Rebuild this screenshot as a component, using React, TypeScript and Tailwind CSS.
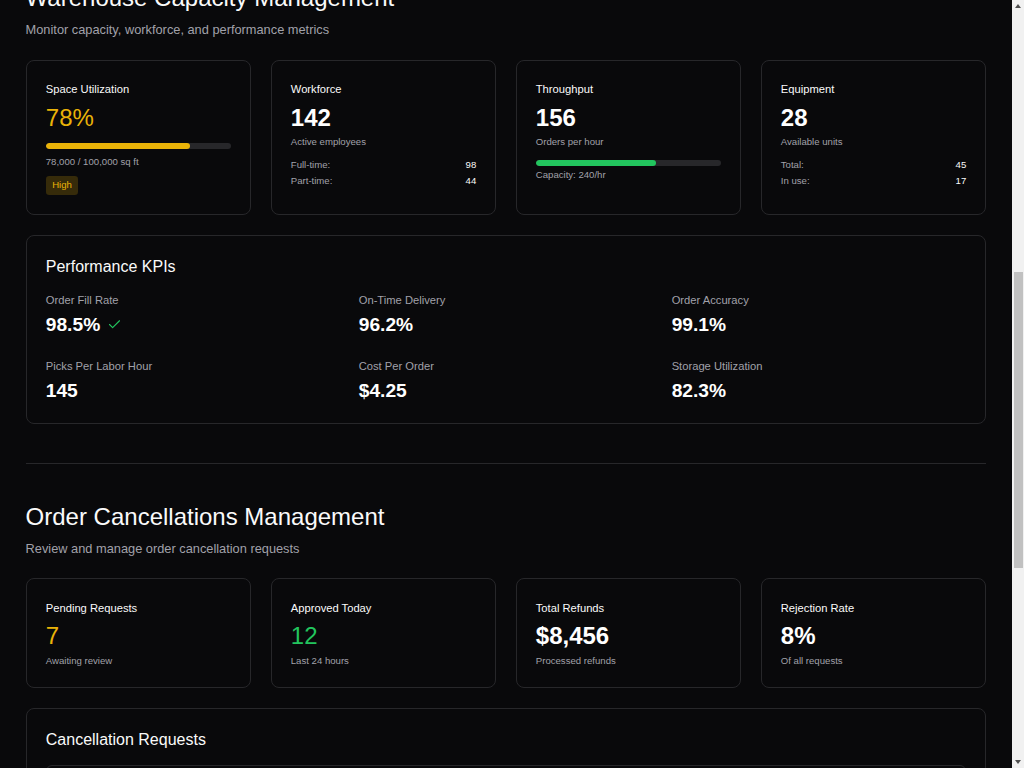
import { useEffect } from 'react';
import { Check } from 'lucide-react';

const CANCEL_STATS = [
  { title: 'Pending Requests', value: '7', note: 'Awaiting review', tone: 'text-[#eab308]' },
  { title: 'Approved Today', value: '12', note: 'Last 24 hours', tone: 'text-[#22c55e]' },
  { title: 'Total Refunds', value: '$8,456', note: 'Processed refunds', tone: 'font-bold text-white' },
  { title: 'Rejection Rate', value: '8%', note: 'Of all requests', tone: 'font-bold text-white' },
];

const KPIS = [
  { label: 'Order Fill Rate', value: '98.5%', ok: true },
  { label: 'On-Time Delivery', value: '96.2%' },
  { label: 'Order Accuracy', value: '99.1%' },
  { label: 'Picks Per Labor Hour', value: '145' },
  { label: 'Cost Per Order', value: '$4.25' },
  { label: 'Storage Utilization', value: '82.3%' },
];

const REQUESTS = [
  { id: 'ORD-10482', customer: 'Sarah Johnson', amount: '$245.00', reason: 'Changed mind', status: 'Pending' },
  { id: 'ORD-10477', customer: 'Michael Chen', amount: '$1,120.50', reason: 'Found better price', status: 'Pending' },
  { id: 'ORD-10471', customer: 'Emily Davis', amount: '$89.99', reason: 'Shipping delay', status: 'Approved' },
  { id: 'ORD-10465', customer: 'James Wilson', amount: '$432.75', reason: 'Ordered by mistake', status: 'Rejected' },
];

const Card: React.FC<{ className?: string; children: React.ReactNode }> = ({ className = '', children }) => (
  <div className={`rounded-lg border border-[#27272a] bg-[#09090b] px-[19.2px] pb-[19.2px] ${className}`}>
    {children}
  </div>
);

const CardTitle: React.FC<{ children: React.ReactNode }> = ({ children }) => (
  <p className="text-[11.2px] leading-4 text-[#fafafa]">{children}</p>
);

const Row: React.FC<{ label: string; value: string }> = ({ label, value }) => (
  <div className="flex justify-between text-[9.6px] leading-[12.8px]">
    <span className="text-[#a1a1aa]">{label}</span>
    <span className="text-[#fafafa]">{value}</span>
  </div>
);

const Bar: React.FC<{ pct: number; color: string }> = ({ pct, color }) => (
  <div className="h-[6.4px] w-full overflow-hidden rounded-full bg-[#27272a]">
    <div className={`h-full rounded-full ${color}`} style={{ width: `${pct}%` }} />
  </div>
);

const SectionHeader: React.FC<{ title: string; subtitle: string }> = ({ title, subtitle }) => (
  <div className="mb-[20.4px]">
    <h1 className="text-[24px] leading-[28.8px] font-medium text-[#fafafa]">{title}</h1>
    <p className="mt-[7.2px] text-[12.8px] leading-[19.2px] text-[#a1a1aa]">{subtitle}</p>
  </div>
);

// classic light scrollbar, as seen in the screenshot
const ScrollTrack: React.FC = () => (
  <div aria-hidden className="fixed inset-y-0 right-0 flex w-[12px] flex-col items-center bg-[#f1f1f1]">
    <svg width="6" height="4" viewBox="0 0 6 4" className="mt-[4px] fill-[#505050]">
      <path d="M3 0 6 4H0z" />
    </svg>
    <div className="mt-[264px] h-[296px] w-[9px] bg-[#c1c1c1]" />
    <div className="flex-1" />
    <svg width="6" height="4" viewBox="0 0 6 4" className="mb-[4px] fill-[#505050]">
      <path d="M0 0h6L3 4z" />
    </svg>
  </div>
);

const App: React.FC = () => {
  useEffect(() => {
    window.scrollTo(0, 40);
  }, []);

  return (
    <div className="min-h-screen bg-[#09090b] font-['Liberation_Sans',Arial,sans-serif] text-[#fafafa]">
      <div className="mr-[12px] px-[25.6px] pt-[24px] pb-[25.6px]">
        <section>
          <SectionHeader
            title="Warehouse Capacity Management"
            subtitle="Monitor capacity, workforce, and performance metrics"
          />

          <div className="grid grid-cols-4 gap-[19.2px]">
            <Card className="pt-[20.3px]">
              <CardTitle>Space Utilization</CardTitle>
              <p className="mt-[6.8px] text-[24px] leading-[28.8px] text-[#eab308]">78%</p>
              <div className="mt-[10.5px]">
                <Bar pct={78} color="bg-[#eab308]" />
              </div>
              <p className="mt-[6.8px] text-[9.6px] leading-[12.8px] text-[#a1a1aa]">78,000 / 100,000 sq ft</p>
              <div className="mt-[6.6px] flex">
                <span className="rounded-[3.2px] bg-[#362b0a] px-[6.4px] py-[3.2px] text-[9.6px] leading-[12.8px] text-[#eab308]">
                  High
                </span>
              </div>
            </Card>

            <Card className="pt-[20.3px]">
              <CardTitle>Workforce</CardTitle>
              <p className="mt-[6.8px] text-[24px] leading-[28.8px] font-bold text-white">142</p>
              <p className="mt-[3.6px] text-[9.6px] leading-[12.8px] text-[#a1a1aa]">Active employees</p>
              <div className="mt-[9.9px] flex flex-col gap-[3.5px]">
                <Row label="Full-time:" value="98" />
                <Row label="Part-time:" value="44" />
              </div>
            </Card>

            <Card className="pt-[20.3px]">
              <CardTitle>Throughput</CardTitle>
              <p className="mt-[6.8px] text-[24px] leading-[28.8px] font-bold text-white">156</p>
              <p className="mt-[3.6px] text-[9.6px] leading-[12.8px] text-[#a1a1aa]">Orders per hour</p>
              <div className="mt-[10.8px]">
                <Bar pct={65} color="bg-[#22c55e]" />
              </div>
              <p className="mt-[3.2px] text-[9.6px] leading-[12.8px] text-[#a1a1aa]">Capacity: 240/hr</p>
            </Card>

            <Card className="pt-[20.3px]">
              <CardTitle>Equipment</CardTitle>
              <p className="mt-[6.8px] text-[24px] leading-[28.8px] font-bold text-white">28</p>
              <p className="mt-[3.6px] text-[9.6px] leading-[12.8px] text-[#a1a1aa]">Available units</p>
              <div className="mt-[9.9px] flex flex-col gap-[3.5px]">
                <Row label="Total:" value="45" />
                <Row label="In use:" value="17" />
              </div>
            </Card>
          </div>

          <Card className="mt-[20.5px] pt-[19.2px]">
            <h2 className="text-[16px] leading-[22.4px] text-[#fafafa]">Performance KPIs</h2>
            <div className="mt-[13.7px] grid grid-cols-3 gap-x-[18.4px] gap-y-[20.2px]">
              {KPIS.map((kpi) => (
                <div key={kpi.label}>
                  <p className="text-[11.2px] leading-4 text-[#a1a1aa]">{kpi.label}</p>
                  <div className="mt-[4.2px] flex items-center gap-[7px]">
                    <span className="text-[19.2px] leading-[25.6px] font-bold text-white">{kpi.value}</span>
                    {kpi.ok && <Check size={15} strokeWidth={1.8} className="text-[#22c55e]" />}
                  </div>
                </div>
              ))}
            </div>
          </Card>
        </section>

        <div className="my-[39px] border-t border-[#27272a]" />

        <section>
          <SectionHeader
            title="Order Cancellations Management"
            subtitle="Review and manage order cancellation requests"
          />

          <div className="grid grid-cols-4 gap-[19.2px]">
            {CANCEL_STATS.map((s) => (
              <Card key={s.title} className="pt-[20.3px]">
                <CardTitle>{s.title}</CardTitle>
                <p className={`mt-[6.8px] text-[24px] leading-[28.8px] ${s.tone}`}>{s.value}</p>
                <p className="mt-[4px] text-[9.6px] leading-[12.8px] text-[#a1a1aa]">{s.note}</p>
              </Card>
            ))}
          </div>

          <Card className="mt-[20.4px] pt-[19.2px]">
            <h2 className="text-[16px] leading-[22.4px] text-[#fafafa]">Cancellation Requests</h2>
            <div className="mt-[13.7px] overflow-hidden rounded-md border border-[#27272a]">
              <table className="w-full text-left text-[11.2px]">
                <thead>
                  <tr className="border-b border-[#27272a] text-[#a1a1aa]">
                    <th className="h-[38.4px] px-[12.8px] font-medium">Order ID</th>
                    <th className="px-[12.8px] font-medium">Customer</th>
                    <th className="px-[12.8px] font-medium">Amount</th>
                    <th className="px-[12.8px] font-medium">Reason</th>
                    <th className="px-[12.8px] font-medium">Status</th>
                  </tr>
                </thead>
                <tbody>
                  {REQUESTS.map((r) => (
                    <tr key={r.id} className="border-b border-[#27272a] last:border-0">
                      <td className="px-[12.8px] py-[12.8px] font-medium">{r.id}</td>
                      <td className="px-[12.8px]">{r.customer}</td>
                      <td className="px-[12.8px]">{r.amount}</td>
                      <td className="px-[12.8px] text-[#a1a1aa]">{r.reason}</td>
                      <td className="px-[12.8px]">{r.status}</td>
                    </tr>
                  ))}
                </tbody>
              </table>
            </div>
          </Card>
        </section>
      </div>
      <ScrollTrack />
    </div>
  );
};

export default App;
